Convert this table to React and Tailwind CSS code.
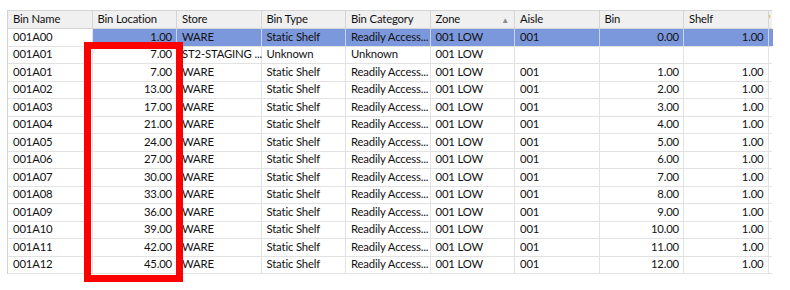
import React from 'react';

const columns = [
  { key: 'name', label: 'Bin Name' },
  { key: 'location', label: 'Bin Location', num: true },
  { key: 'store', label: 'Store' },
  { key: 'type', label: 'Bin Type' },
  { key: 'category', label: 'Bin Category' },
  { key: 'zone', label: 'Zone', sorted: true },
  { key: 'aisle', label: 'Aisle' },
  { key: 'bin', label: 'Bin', num: true },
  { key: 'shelf', label: 'Shelf', num: true },
];

const shelfRow = (name, location, bin) => ({
  name,
  location,
  store: 'WARE',
  type: 'Static Shelf',
  category: 'Readily Access...',
  zone: '001 LOW',
  aisle: '001',
  bin,
  shelf: '1.00',
});

const rows = [
  shelfRow('001A00', '1.00', '0.00'),
  {
    name: '001A01',
    location: '7.00',
    store: 'ST2-STAGING ...',
    type: 'Unknown',
    category: 'Unknown',
    zone: '001 LOW',
    aisle: '',
    bin: '',
    shelf: '',
  },
  shelfRow('001A01', '7.00', '1.00'),
  shelfRow('001A02', '13.00', '2.00'),
  shelfRow('001A03', '17.00', '3.00'),
  shelfRow('001A04', '21.00', '4.00'),
  shelfRow('001A05', '24.00', '5.00'),
  shelfRow('001A06', '27.00', '6.00'),
  shelfRow('001A07', '30.00', '7.00'),
  shelfRow('001A08', '33.00', '8.00'),
  shelfRow('001A09', '36.00', '9.00'),
  shelfRow('001A10', '39.00', '10.00'),
  shelfRow('001A11', '42.00', '11.00'),
  shelfRow('001A12', '45.00', '12.00'),
];

function HeaderRow() {
  return (
    <div className="flex h-[18px] border-b border-[#d4d4d4] bg-[#f0f0f0]">
      {columns.map((col) => (
        <div
          key={col.key}
          className="flex w-[84.5px] shrink-0 items-center justify-between border-r border-[#d4d4d4] pl-[5px] pr-[5px]"
        >
          <span className="whitespace-nowrap">{col.label}</span>
          {col.sorted && <span className="text-[8px] text-[#8a8a8a]">▲</span>}
        </div>
      ))}
      <div className="w-[4px] shrink-0 overflow-hidden text-[#e0b000]">'</div>
    </div>
  );
}

function DataRow({ row, selected }) {
  return (
    <div className="flex h-[17.5px] border-b border-[#e2e2e2]">
      {columns.map((col, i) => {
        const active = selected && i > 0;
        return (
          <div
            key={col.key}
            className={
              'flex w-[84.5px] shrink-0 items-center whitespace-nowrap border-r pl-[5px] pr-[4px] ' +
              (active ? 'border-[#c9d3ee] bg-[#7b98dc] ' : 'border-[#e2e2e2] ') +
              (col.num ? 'justify-end' : 'justify-start')
            }
          >
            {row[col.key]}
          </div>
        );
      })}
      <div className={'w-[4px] shrink-0 ' + (selected ? 'bg-[#7b98dc]' : '')} />
    </div>
  );
}

export default function App() {
  return (
    <div
      className="relative h-[290px] w-[790px] overflow-hidden bg-white pl-[7px] pt-[10px] text-[11.3px] tracking-[-0.15px] text-[#111]"
      style={{ fontFamily: 'Lato, "Noto Sans", sans-serif' }}
    >
      <div className="w-[765px] border-l border-t border-[#d4d4d4]">
        <HeaderRow />
        {rows.map((row, i) => (
          <DataRow key={i} row={row} selected={i === 0} />
        ))}
      </div>

      {/* highlight around the Bin Location column */}
      <div className="absolute left-[84px] top-[42px] h-[240px] w-[99px] border-[7px] border-[#ff0000]" />
    </div>
  );
}
